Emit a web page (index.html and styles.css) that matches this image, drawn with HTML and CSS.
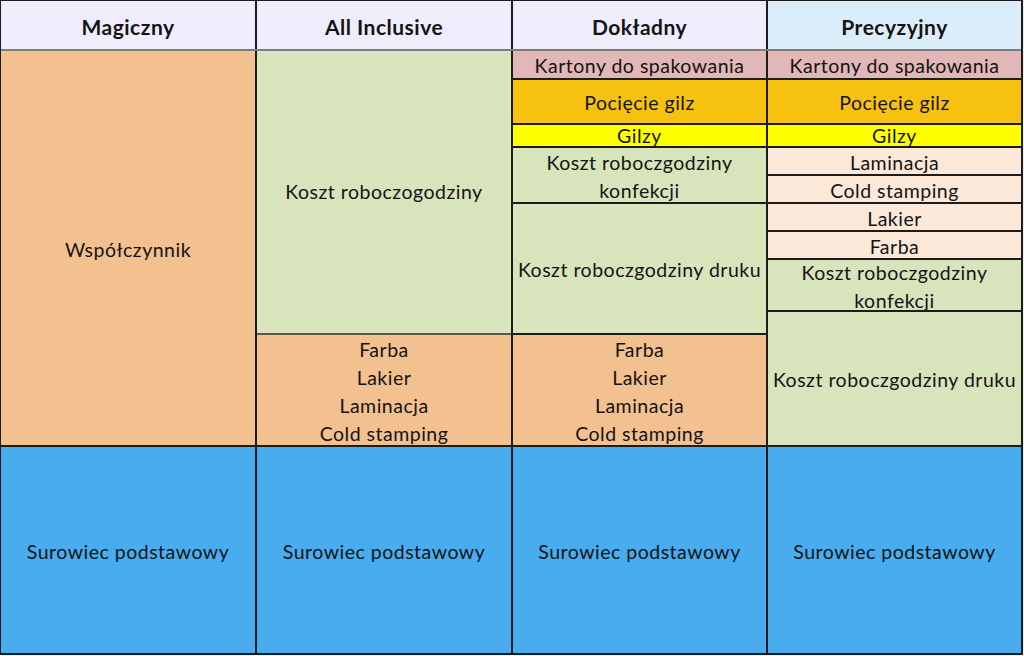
FILE: index.html
```html
<!DOCTYPE html>
<html lang="pl">
<head>
<meta charset="utf-8">
<title>Porównanie</title>
<link rel="stylesheet" href="styles.css">
</head>
<body>
<div class="table">
  <div class="head">
    <div class="hcell h-lav">Magiczny</div>
    <div class="hcell h-lav">All Inclusive</div>
    <div class="hcell h-lav">Dokładny</div>
    <div class="hcell h-blue">Precyzyjny</div>
  </div>
  <div class="body">
    <div class="cell orange c1 r-wsp">Współczynnik</div>
    <div class="cell green c2 r-ai-koszt">Koszt roboczogodziny</div>
    <div class="cell orange c2 r-ai-farba brown-top">Farba<br>Lakier<br>Laminacja<br>Cold stamping</div>

    <div class="cell pink c3 r2">Kartony do spakowania</div>
    <div class="cell gold c3 r3">Pocięcie gilz</div>
    <div class="cell yellow c3 r4 thin">Gilzy</div>
    <div class="cell green c3 r-d-konf">Koszt roboczgodziny<br>konfekcji</div>
    <div class="cell green c3 r-d-druk">Koszt roboczgodziny druku</div>
    <div class="cell orange c3 r11">Farba<br>Lakier<br>Laminacja<br>Cold stamping</div>

    <div class="cell pink c4 r2">Kartony do spakowania</div>
    <div class="cell gold c4 r3">Pocięcie gilz</div>
    <div class="cell yellow c4 r4 thin">Gilzy</div>
    <div class="cell peach c4 r5">Laminacja</div>
    <div class="cell peach c4 r6">Cold stamping</div>
    <div class="cell peach c4 r7">Lakier</div>
    <div class="cell peach c4 r8">Farba</div>
    <div class="cell green c4 r9">Koszt roboczgodziny<br>konfekcji</div>
    <div class="cell green c4 r-p-druk">Koszt roboczgodziny druku</div>

    <div class="cell blue c1 r12">Surowiec podstawowy</div>
    <div class="cell blue c2 r12">Surowiec podstawowy</div>
    <div class="cell blue c3 r12">Surowiec podstawowy</div>
    <div class="cell blue c4 r12">Surowiec podstawowy</div>
  </div>
</div>
</body>
</html>
```
FILE: styles.css
```css
html, body {
  margin: 0;
  padding: 0;
  background: #ededed;
}
body {
  width: 1024px;
  height: 656px;
  overflow: hidden;
  font-family: Lato, "Liberation Sans", sans-serif;
  color: #141414;
}
.table {
  box-sizing: border-box;
  width: 1023px;
  height: 655px;
  background: #1c1c1c;
  padding: 1px 2px 2px 1px;
  display: flex;
  flex-direction: column;
}
.head {
  display: grid;
  grid-template-columns: 254px 254px 253px 253px;
  column-gap: 2px;
  height: 48px;
  border-bottom: 2px solid #7c7c7c;
}
.hcell {
  display: flex;
  align-items: center;
  justify-content: center;
  font-weight: 700;
  font-size: 21px;
  letter-spacing: 0.5px;
  padding-top: 2px;
  box-sizing: border-box;
}
.h-lav { background: #efedfb; }
.h-blue { background: #dcedfa; }
.body {
  display: grid;
  grid-template-columns: 254px 254px 253px 253px;
  grid-template-rows: 27px 43px 21px 26px 26px 26px 26px 50px 21px 110px 206px;
  gap: 2px;
}
.cell {
  display: flex;
  align-items: center;
  justify-content: center;
  text-align: center;
  font-size: 19.5px;
  letter-spacing: 0.5px;
  line-height: 28px;
  padding-top: 3px;
  box-sizing: border-box;
  overflow: hidden;
  white-space: nowrap;
}
.thin {
  line-height: 21px;
  padding-top: 0;
}
.c1 { grid-column: 1; }
.c2 { grid-column: 2; }
.c3 { grid-column: 3; }
.c4 { grid-column: 4; }
.r2 { grid-row: 1; }
.r3 { grid-row: 2; }
.r4 { grid-row: 3; }
.r5 { grid-row: 4; }
.r6 { grid-row: 5; }
.r7 { grid-row: 6; }
.r8 { grid-row: 7; }
.r9 { grid-row: 8; }
.r11 { grid-row: 10; }
.r12 { grid-row: 11; }
.r-wsp { grid-row: 1 / 11; }
.r-ai-koszt { grid-row: 1 / 10; }
.r-ai-farba { grid-row: 10; }
.r-d-konf { grid-row: 4 / 6; }
.r-d-druk { grid-row: 6 / 10; }
.r-p-druk { grid-row: 9 / 11; }

.orange { background: #f3c08f; }
.green { background: #d8e4bc; }
.pink { background: #e2b7b7; }
.gold { background: #f6c10f; }
.yellow { background: #ffff00; }
.peach { background: #fce8d9; }
.blue { background: #48acee; }
.brown-top { box-shadow: 0 -2px 0 #64574a; }
.r-ai-koszt { padding-top: 0; }
```
